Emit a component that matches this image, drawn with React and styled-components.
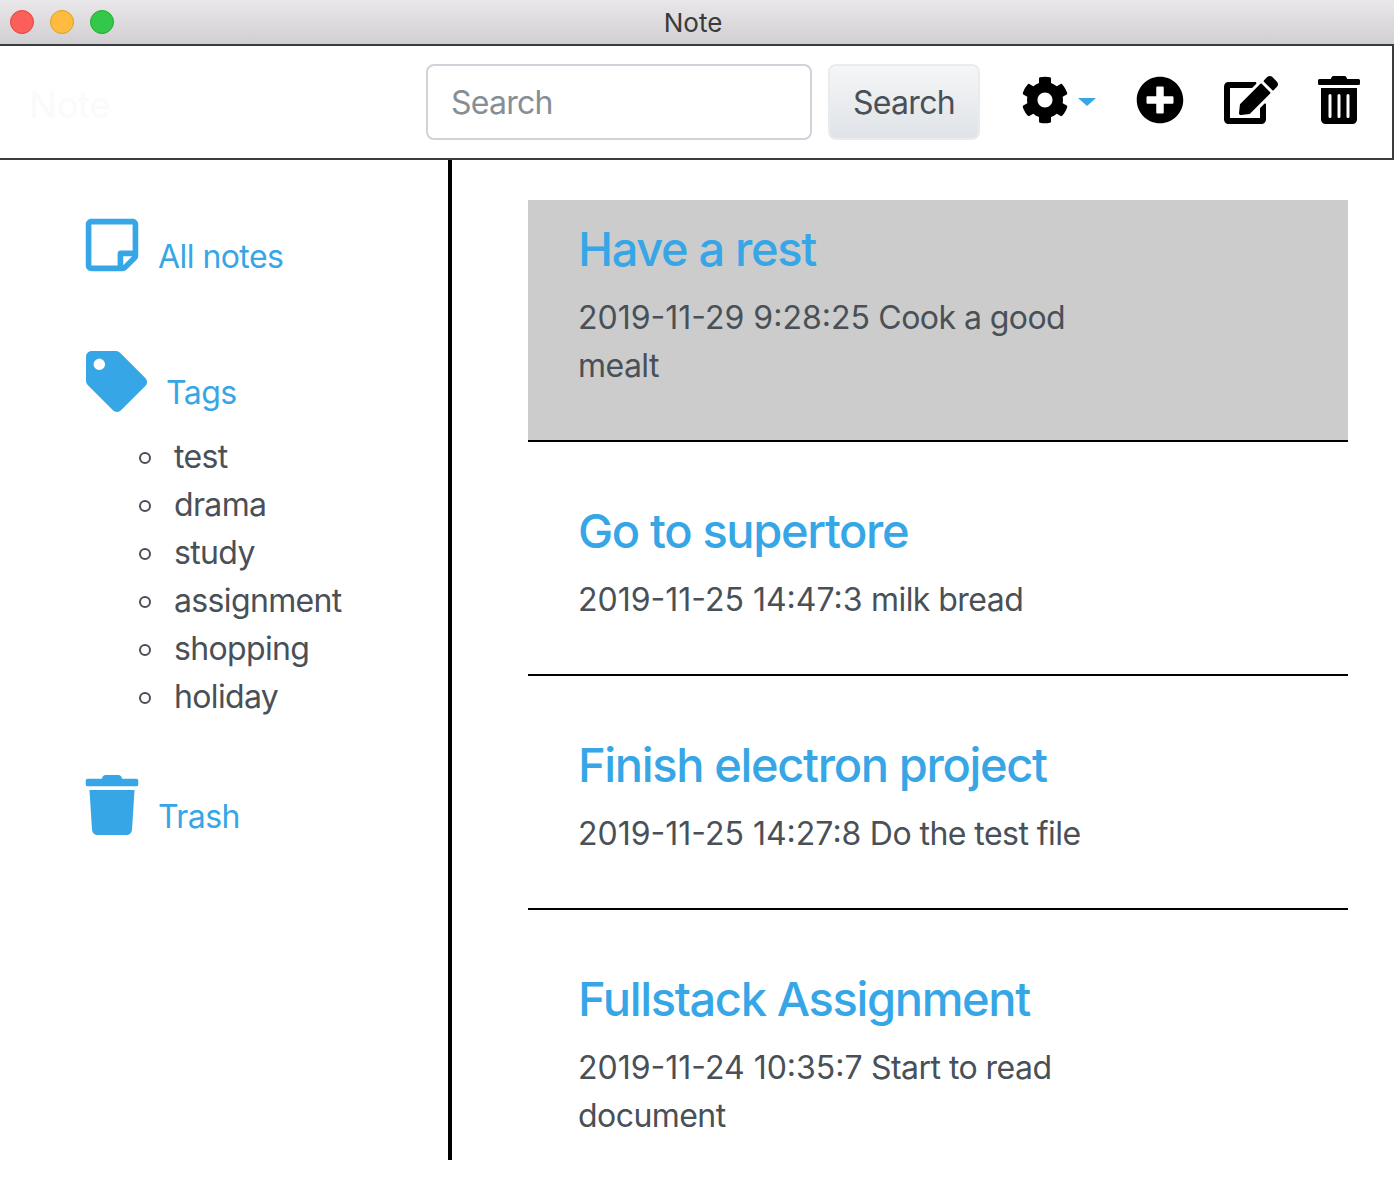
import React from "react"
import styled, { createGlobalStyle } from "styled-components"
import { FaCog, FaPlusCircle, FaEdit, FaTrashAlt, FaRegStickyNote, FaTag, FaTrash } from "react-icons/fa"

const blue = "#37a6e6"
const ink = "#495057"

const GlobalStyle = createGlobalStyle`
  * { box-sizing: border-box; }
  html, body { margin: 0; background: #fff; }
  body {
    font-family: Inter, "Liberation Sans", sans-serif;
    font-size: 32px;
    line-height: 48px;
    color: ${ink};
  }
`

const TitleBar = styled.div`
  height: 46px;
  display: flex;
  align-items: center;
  position: relative;
  padding: 0 10px 0;
  gap: 16px;
  background: linear-gradient(#e9e7e9, #d1cfd1);
  border-bottom: 2px solid #3a3d40;
`
const Light = styled.span`
  width: 24px;
  height: 24px;
  border-radius: 50%;
  background: ${p => p.color};
  border: 1px solid ${p => p.edge};
`
const WindowTitle = styled.div`
  position: absolute;
  left: 0;
  right: 8px;
  top: 0;
  text-align: center;
  font-size: 26px;
  line-height: 45px;
  color: #3a3a3a;
`

const Header = styled.header`
  height: 114px;
  display: flex;
  align-items: center;
  border-right: 2px solid #3a3d40;
  border-bottom: 2px solid #3a3d40;
  padding-left: 29px;
`
const Brand = styled.div`
  width: 398px;
  font-size: 37px;
  letter-spacing: -0.5px;
  color: #fafafa;
  padding-top: 6px;
`
const SearchInput = styled.input`
  width: 386px;
  height: 76px;
  margin-left: -1px;
  padding: 1px 23px 0;
  font: inherit;
  letter-spacing: -0.75px;
  color: ${ink};
  border: 2px solid #ced4da;
  border-radius: 8px;
  outline: none;
  &::placeholder { color: #868e96; opacity: 1; }
`
const SearchButton = styled.button`
  width: 152px;
  height: 76px;
  margin-left: 16px;
  padding: 2px 0 0;
  font: inherit;
  letter-spacing: -0.7px;
  color: ${ink};
  border: 2px solid #e9ecef;
  border-radius: 8px;
  background: linear-gradient(#f5f6f7, #dfe3e7);
`
const Tools = styled.div`
  display: flex;
  align-items: center;
  margin-left: 41px;
  padding-bottom: 4px;
  color: #000;
  svg { display: block; }
`
const Caret = styled.span`
  width: 0;
  height: 0;
  margin: 4px 40px 0 9px;
  border-left: 9px solid transparent;
  border-right: 9px solid transparent;
  border-top: 8px solid ${blue};
`
const ToolSpacer = styled.span`
  width: ${p => p.size}px;
`

const Body = styled.div`
  display: flex;
  height: 1000px;
  overflow: hidden;
`
const Sidebar = styled.aside`
  width: 452px;
  flex: none;
  padding: 55px 0 0 86px;
  border-right: 4px solid #000;
`
const NavRow = styled.div`
  display: flex;
  align-items: flex-end;
  gap: ${p => p.gap}px;
  color: ${blue};
  margin-top: ${p => p.top || 0}px;
  margin-left: ${p => p.inset || 0}px;
  letter-spacing: -0.55px;
  svg { display: block; flex: none; }
`
const NavLabel = styled.span`
  position: relative;
  top: ${p => p.shift}px;
`
const TagList = styled.ul`
  list-style: none;
  margin: 21px 0 0;
  padding: 0 0 0 88px;
`
const TagItem = styled.li`
  position: relative;
  letter-spacing: -0.65px;
  &::before {
    content: "";
    box-sizing: border-box;
    position: absolute;
    left: -35px;
    top: 19px;
    width: 12px;
    height: 12px;
    border: 2px solid ${ink};
    border-radius: 50%;
  }
`
const Notes = styled.main`
  flex: 1;
  padding: 40px 46px 0 76px;
`
const Note = styled.article`
  padding: 15px 50px 50px;
  margin-top: ${p => (p.first ? 0 : 40)}px;
  background: ${p => (p.selected ? "#cccccc" : "transparent")};
`
const Rule = styled.div`
  height: 2px;
  background: #000;
`
const NoteTitle = styled.h3`
  margin: 0 0 12px;
  font-size: 47px;
  font-weight: 500;
  line-height: 67px;
  letter-spacing: -1.35px;
  color: ${blue};
`
const NoteText = styled.p`
  margin: 0;
  width: 540px;
  letter-spacing: -0.55px;
`
const Stamp = styled.span`
  letter-spacing: 0;
`

const tags = ["test", "drama", "study", "assignment", "shopping", "holiday"]
const notes = [
  { title: "Have a rest", date: "2019-11-29 9:28:25", text: "Cook a good mealt", selected: true },
  { title: "Go to supertore", date: "2019-11-25 14:47:3", text: "milk bread" },
  { title: "Finish electron project", date: "2019-11-25 14:27:8", text: "Do the test file" },
  { title: "Fullstack Assignment", date: "2019-11-24 10:35:7", text: "Start to read document" },
]

export default function App() {
  return (
    <>
      <GlobalStyle />
      <TitleBar>
        <Light color="#fc5f5a" edge="#e2443f" />
        <Light color="#fdbc40" edge="#dfa023" />
        <Light color="#34c84a" edge="#1dad2b" />
        <WindowTitle>Note</WindowTitle>
      </TitleBar>
      <Header>
        <Brand>Note</Brand>
        <SearchInput placeholder="Search" />
        <SearchButton>Search</SearchButton>
        <Tools>
          <FaCog size={48} />
          <Caret />
          <FaPlusCircle size={48} />
          <ToolSpacer size={40} />
          <FaEdit size={54} />
          <ToolSpacer size={37} />
          <FaTrashAlt size={48} />
        </Tools>
      </Header>
      <Body>
        <Sidebar>
          <NavRow gap={16} inset={-4}>
            <FaRegStickyNote size={60} />
            <NavLabel shift={6}>All notes</NavLabel>
          </NavRow>
          <NavRow gap={19} top={76}>
            <FaTag size={61} />
            <NavLabel shift={5}>Tags</NavLabel>
          </NavRow>
          <TagList>
            {tags.map(t => <TagItem key={t}>{t}</TagItem>)}
          </TagList>
          <NavRow gap={16} top={54} inset={-4}>
            <FaTrash size={60} />
            <NavLabel shift={6}>Trash</NavLabel>
          </NavRow>
        </Sidebar>
        <Notes>
          {notes.map((n, i) => (
            <React.Fragment key={n.title}>
              <Note first={i === 0} selected={n.selected}>
                <NoteTitle>{n.title}</NoteTitle>
                <NoteText><Stamp>{n.date}</Stamp> {n.text}</NoteText>
              </Note>
              <Rule />
            </React.Fragment>
          ))}
        </Notes>
      </Body>
    </>
  )
}
